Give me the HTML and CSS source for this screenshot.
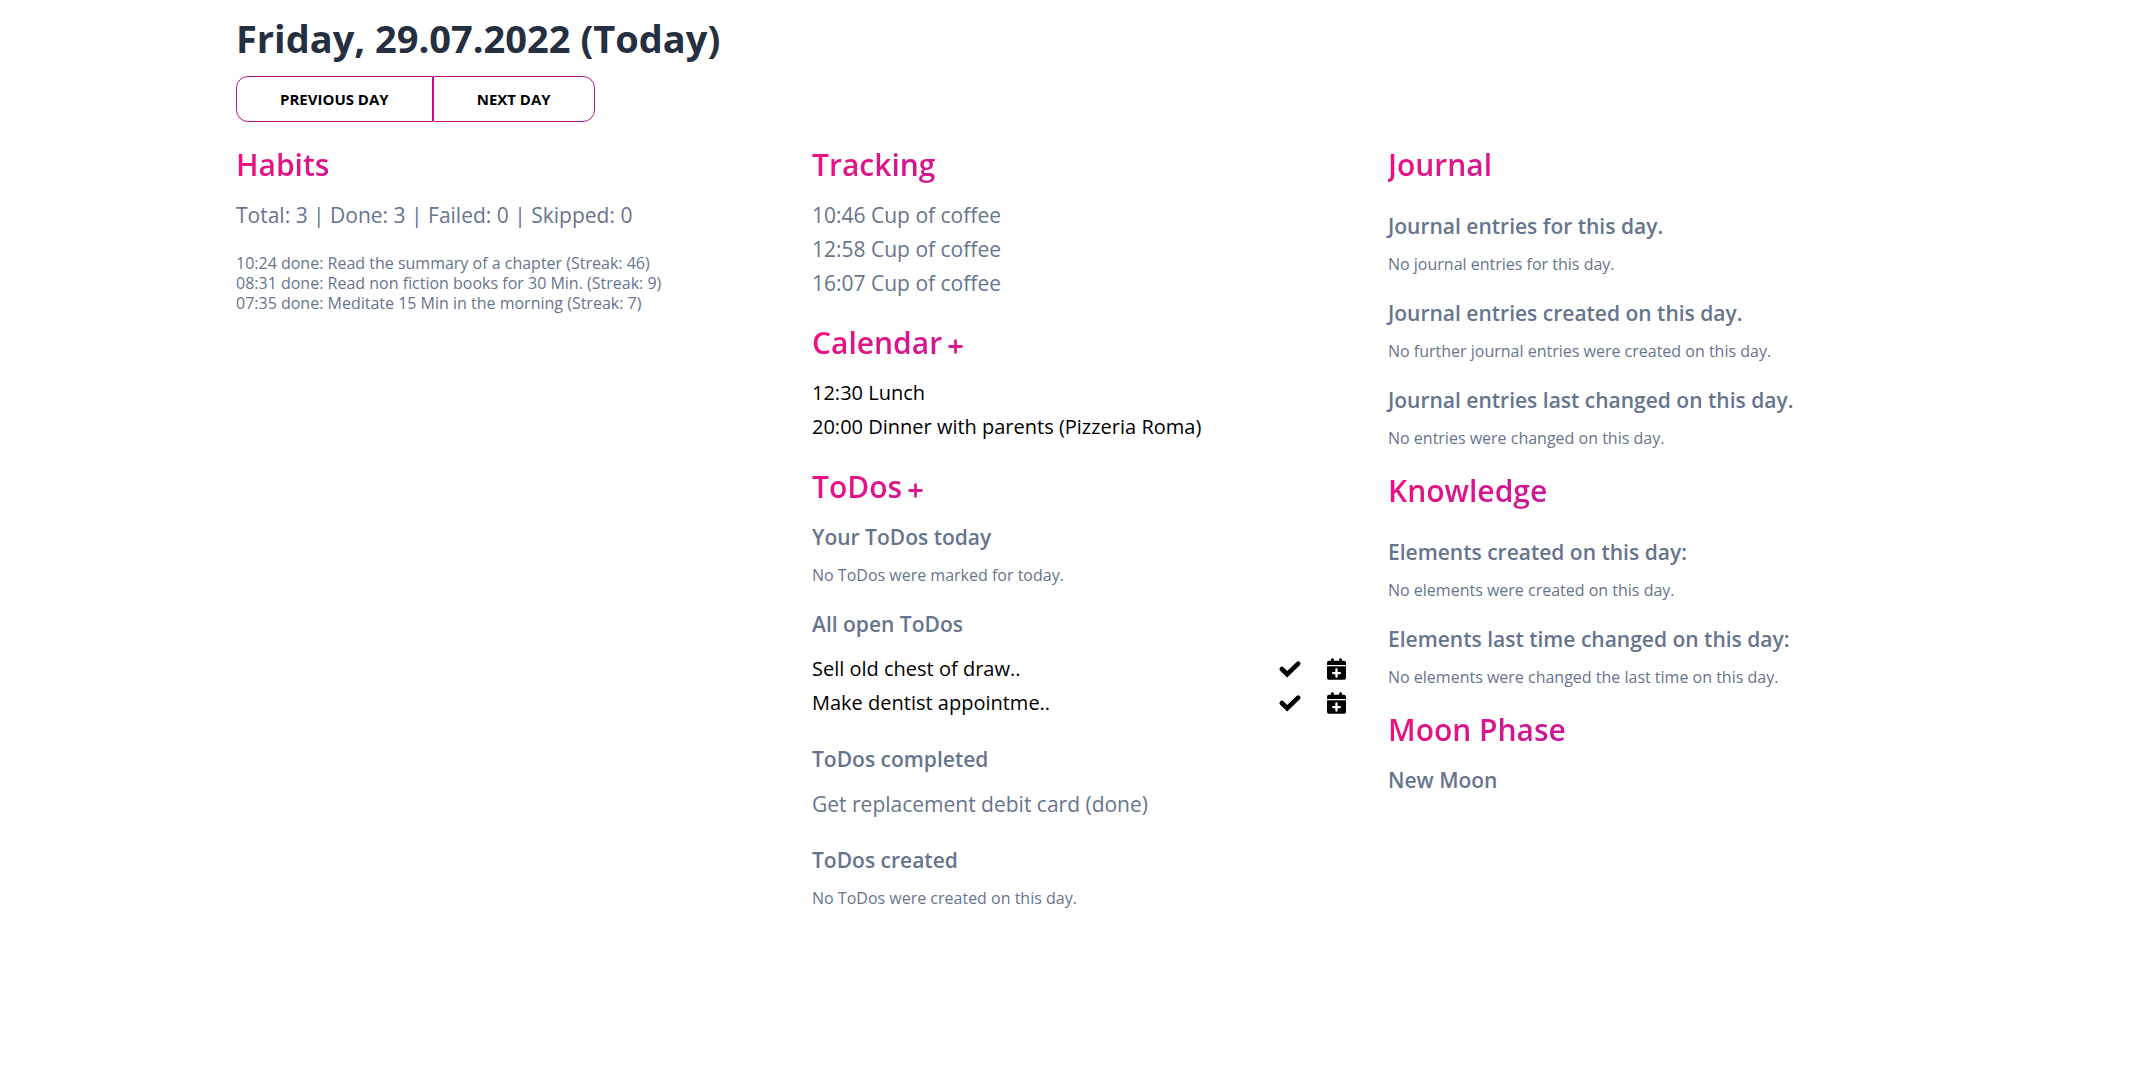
FILE: index.html
```html
<!DOCTYPE html>
<html lang="en">
<head>
<meta charset="utf-8">
<meta name="viewport" content="width=device-width, initial-scale=1">
<title>Friday, 29.07.2022</title>
<link rel="stylesheet" href="styles.css">
</head>
<body>
<svg class="sprite" aria-hidden="true">
  <symbol id="icon-plus" viewBox="0 0 14 14"><path d="M7 1.500v11M1.500 7h11" fill="none" stroke="currentColor" stroke-width="2.600" stroke-linecap="round"/></symbol>
  <symbol id="icon-check" viewBox="0 0 24 20"><path d="M3.800 10 9.200 15.200 20.200 4.600" fill="none" stroke="currentColor" stroke-width="4.600" stroke-linecap="round" stroke-linejoin="miter"/></symbol>
  <symbol id="icon-calendar-plus" viewBox="0 0 448 512"><path fill="currentColor" d="M96 32v32H48C21.500 64 0 85.500 0 112v48h448v-48c0-26.500-21.500-48-48-48h-48V32c0-17.700-14.300-32-32-32s-32 14.300-32 32v32H160V32c0-17.700-14.300-32-32-32S96 14.300 96 32zM448 192H0v272c0 26.500 21.500 48 48 48h352c26.500 0 48-21.500 48-48V192zM224 240c15 0 28 12 28 28v56h52c15 0 28 12 28 28s-13 28-28 28h-52v52c0 16-13 28-28 28s-28-12-28-28v-52h-52c-15 0-28-12-28-28s13-28 28-28h52v-56c0-16 13-28 28-28z"/></symbol>
</svg>
<main class="page">
  <h1 class="title">Friday, 29.07.2022 (Today)</h1>
  <nav class="day-nav" aria-label="Day">
    <button class="day-button" type="button">PREVIOUS DAY</button>
    <button class="day-button" type="button">NEXT DAY</button>
  </nav>
  <div class="columns">
    <div class="column">
      <section>
        <h2 class="heading">Habits</h2>
        <p class="text">Total: 3 | Done: 3 | Failed: 0 | Skipped: 0</p>
        <ul class="list habit-log">
          <li>10:24 done: Read the summary of a chapter (Streak: 46)</li>
          <li>08:31 done: Read non fiction books for 30 Min. (Streak: 9)</li>
          <li>07:35 done: Meditate 15 Min in the morning (Streak: 7)</li>
        </ul>
      </section>
    </div>
    <div class="column">
      <section>
        <h2 class="heading">Tracking</h2>
        <ul class="list text">
          <li>10:46 Cup of coffee</li>
          <li>12:58 Cup of coffee</li>
          <li>16:07 Cup of coffee</li>
        </ul>
      </section>
      <section>
        <h2 class="heading">Calendar<a class="add" href="#" aria-label="Add event"><svg class="icon-plus"><use href="#icon-plus"/></svg></a></h2>
        <ul class="list">
          <li><a class="link" href="#">12:30 Lunch</a></li>
          <li><a class="link" href="#">20:00 Dinner with parents (Pizzeria Roma)</a></li>
        </ul>
      </section>
      <section>
        <h2 class="heading">ToDos<a class="add" href="#" aria-label="Add to-do"><svg class="icon-plus"><use href="#icon-plus"/></svg></a></h2>
        <div class="groups">
          <div class="group">
            <h3 class="subheading">Your ToDos today</h3>
            <p class="note">No ToDos were marked for today.</p>
          </div>
          <div class="group">
            <h3 class="subheading">All open ToDos</h3>
            <ul class="list">
              <li class="todo">
                <a class="link todo-name" href="#">Sell old chest of draw..</a>
                <button class="icon-button" type="button" aria-label="Complete"><svg class="icon-check"><use href="#icon-check"/></svg></button>
                <button class="icon-button" type="button" aria-label="Plan for today"><svg class="icon-calendar"><use href="#icon-calendar-plus"/></svg></button>
              </li>
              <li class="todo">
                <a class="link todo-name" href="#">Make dentist appointme..</a>
                <button class="icon-button" type="button" aria-label="Complete"><svg class="icon-check"><use href="#icon-check"/></svg></button>
                <button class="icon-button" type="button" aria-label="Plan for today"><svg class="icon-calendar"><use href="#icon-calendar-plus"/></svg></button>
              </li>
            </ul>
          </div>
          <div class="group">
            <h3 class="subheading">ToDos completed</h3>
            <p class="text">Get replacement debit card (done)</p>
          </div>
          <div class="group">
            <h3 class="subheading">ToDos created</h3>
            <p class="note">No ToDos were created on this day.</p>
          </div>
        </div>
      </section>
    </div>
    <div class="column">
      <section class="spaced">
        <h2 class="heading">Journal</h2>
        <div class="groups">
          <div class="group">
            <h3 class="subheading">Journal entries for this day.</h3>
            <p class="note">No journal entries for this day.</p>
          </div>
          <div class="group">
            <h3 class="subheading">Journal entries created on this day.</h3>
            <p class="note">No further journal entries were created on this day.</p>
          </div>
          <div class="group">
            <h3 class="subheading">Journal entries last changed on this day.</h3>
            <p class="note">No entries were changed on this day.</p>
          </div>
        </div>
      </section>
      <section class="spaced">
        <h2 class="heading">Knowledge</h2>
        <div class="groups">
          <div class="group">
            <h3 class="subheading">Elements created on this day:</h3>
            <p class="note">No elements were created on this day.</p>
          </div>
          <div class="group">
            <h3 class="subheading">Elements last time changed on this day:</h3>
            <p class="note">No elements were changed the last time on this day.</p>
          </div>
        </div>
      </section>
      <section>
        <h2 class="heading">Moon Phase</h2>
        <h3 class="subheading">New Moon</h3>
      </section>
    </div>
  </div>
</main>
</body>
</html>
```
FILE: styles.css
```css
* {
  box-sizing: border-box;
}

body {
  margin: 0;
  background: #fff;
  color: #67748e;
  font-family: "Open Sans", sans-serif;
  font-size: 21px;
  line-height: 34px;
}

h1, h2, h3, p, ul {
  margin: 0;
}

.sprite {
  position: absolute;
  width: 0;
  height: 0;
}

.page {
  max-width: 1728px;
  margin: 0 auto;
  padding: 12px 13px 48px 29px;
}

.title {
  color: #252f40;
  font-size: 38px;
  font-weight: 700;
  line-height: 52px;
}

.day-nav {
  display: flex;
  margin: 12px 0 23px;
}

.day-button {
  padding: 12px 43px;
  border: 1px solid #b4148b;
  border-radius: 12px;
  background: transparent;
  color: #000;
  font: 700 15px/20px "Open Sans", sans-serif;
  cursor: pointer;
}

.day-button:first-child {
  border-top-right-radius: 0;
  border-bottom-right-radius: 0;
}

.day-button:last-child {
  border-top-left-radius: 0;
  border-bottom-left-radius: 0;
}

.columns {
  display: grid;
  grid-template-columns: repeat(3, minmax(0, 1fr));
  gap: 42px;
}

.column {
  display: flex;
  flex-direction: column;
  gap: 23px;
}

.heading {
  margin-bottom: 13px;
  background: linear-gradient(310deg, #7928ca, #f0107f);
  background-clip: text;
  -webkit-background-clip: text;
  color: transparent;
  font-size: 30px;
  font-weight: 600;
  line-height: 40px;
}

.spaced .heading {
  margin-bottom: 24px;
}

.add {
  margin-left: 6px;
  color: #d81a8e;
}

.icon-plus {
  width: 15px;
  height: 15px;
}

.list {
  padding: 0;
  list-style: none;
}

.habit-log {
  margin-top: 21px;
  font-size: 16px;
  line-height: 20px;
}

.link {
  display: block;
  color: #000;
  font-size: 20px;
  text-decoration: none;
}

.groups {
  display: flex;
  flex-direction: column;
  gap: 22px;
}

.group {
  display: flex;
  flex-direction: column;
  gap: 11px;
}

.subheading {
  font-size: 21px;
  font-weight: 600;
  line-height: 34px;
}

.note {
  font-size: 16px;
  line-height: 20px;
}

.todo {
  display: flex;
  align-items: center;
}

.todo-name {
  flex: 1;
}

.icon-button {
  display: flex;
  margin-left: 25px;
  padding: 0;
  border: 0;
  background: none;
  color: #000;
  cursor: pointer;
}

.icon-check {
  width: 24px;
  height: 20px;
}

.icon-calendar {
  width: 19px;
  height: 22px;
}
```
